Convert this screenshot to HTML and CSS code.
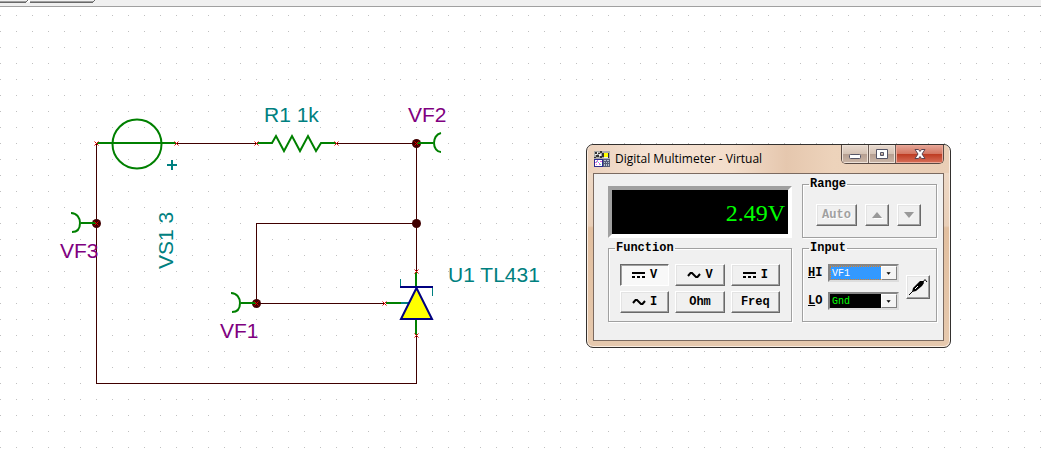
FILE: index.html
```html
<!DOCTYPE html>
<html lang="en">
<head>
<meta charset="utf-8">
<title>Digital Multimeter - Virtual</title>
<link rel="stylesheet" href="styles.css">
</head>
<body>
<header class="tabs">
  <svg width="100" height="6" viewBox="0 0 100 6" shape-rendering="crispEdges" aria-hidden="true">
    <path fill="#fff" d="M27 0h3v2h-3z"/>
    <path fill="#a0a0a0" d="M0 1h26v1H0zM30 1h63v1H30z"/>
    <path fill="#696969" d="M0 2h26v1H0zM30 2h63v1H30zM26 1h1v1h-1zM27 0h1v1h-1zM93 1h1v1h-1zM94 0h1v1h-1z"/>
  </svg>
</header>
<main class="canvas">
  <svg class="schematic" width="580" height="420" viewBox="0 7 580 420" role="img" aria-label="TL431 circuit">
    <defs>
      <g id="pin"><path d="M-2 -2L2 2M2 -2L-2 2"/></g>
    </defs>
    <g class="wire">
      <path d="M96.500 143.500V383.500H416.500V335M176 143.500H257M336 143.500H416.500V271M416 223.500H256.500V303.500H385"/>
    </g>
    <g class="node">
      <circle cx="96.500" cy="223.500" r="4.500"/>
      <circle cx="416.500" cy="143.500" r="4.500"/>
      <circle cx="416.500" cy="223.500" r="4.500"/>
      <circle cx="256.500" cy="303.500" r="4.500"/>
    </g>
    <g class="part">
      <path d="M97 143H176"/>
      <circle cx="137" cy="144" r="24.500"/>
      <path d="M257 143H272L276 136L284 151L292 136L300 151L308 136L316 151L321 143H336"/>
      <path d="M96 223H81M71 213C77 213 80 218 80 223C80 228 78 232 72 232"/>
      <path d="M417 143H433M441 133C436 134 434 139 434 143C434 148 437 152 441 152"/>
      <path d="M256 303H241M231 293C237 293 240 298 240 303C240 308 238 312 232 312"/>
      <path d="M416 272V288M416 319V335M386 303H401"/>
    </g>
    <g class="tip">
      <path d="M400.500 279V287M432.500 287V296"/>
      <path d="M401 303H410" stroke-width="2"/>
      <path d="M167 165H177M172 160V170" stroke-width="2"/>
    </g>
    <path class="diode" d="M416.500 288L401 319H432Z"/>
    <path class="bar" d="M400 287H433"/>
    <g class="pins">
      <use href="#pin" x="96.500" y="143.500"/>
      <use href="#pin" x="176.500" y="143.500"/>
      <use href="#pin" x="256.500" y="143.500"/>
      <use href="#pin" x="336.500" y="143.500"/>
      <use href="#pin" x="416.500" y="143.500"/>
      <use href="#pin" x="96.500" y="223.500"/>
      <use href="#pin" x="256.500" y="303.500"/>
      <use href="#pin" x="384.500" y="303.500"/>
      <use href="#pin" x="416.500" y="271.500"/>
      <use href="#pin" x="416.500" y="335.500"/>
    </g>
    <g class="name">
      <text x="264" y="122">R1 1k</text>
      <text x="448" y="282">U1 TL431</text>
      <text transform="translate(173 269) rotate(-90)">VS1 3</text>
    </g>
    <g class="probe">
      <text x="408" y="122">VF2</text>
      <text x="60" y="258">VF3</text>
      <text x="220" y="338">VF1</text>
    </g>
  </svg>

  <section class="window" aria-labelledby="title">
    <div class="titlebar">
      <svg class="appicon" width="16" height="16" viewBox="0 0 16 16" shape-rendering="crispEdges" aria-hidden="true">
        <path fill="#aaa" d="M0 0h16v8H0z"/>
        <path fill="#333" d="M1 1h2v2H1zM4 2h2v1H4zM2 4h3v2H2zM6 0h2v2H6zM0 6h2v1H0zM6 5h2v2H6zM8 2h2v4H8zM14 2h1v5h-1z"/>
        <path fill="#eee" d="M3 1h1v2H3zM1 3h2v1H1zM5 3h2v2H5zM10 6h4v1h-4z"/>
        <path fill="#ff0" d="M10 2h4v4h-4z"/>
        <path fill="#2b2b90" d="M0 8h9v8H0z"/>
        <path fill="#fff" d="M1 9h7v6H1z"/>
        <path fill="#e070e0" d="M1 11h2v1H1zM3 9h1v2H3zM5 12h1v2H5zM6 10h2v1H6zM2 13h1v1H2z"/>
        <path fill="#64c8d8" d="M4 11h1v1H4zM6 13h1v1H6zM2 10h1v1H2z"/>
        <path fill="#555c78" d="M9 8h7v8H9z"/>
        <path fill="#b8c0d0" d="M10 9h2v1h-2zM13 9h2v1h-2zM10 11h1v1h-1zM12 11h1v1h-1zM14 11h1v1h-1zM10 13h1v2h-1zM12 13h1v2h-1zM14 13h1v2h-1z"/>
      </svg>
      <h1 class="title" id="title">Digital Multimeter - Virtual</h1>
      <div class="controls">
        <button class="ctl" aria-label="Minimize"><svg width="14" height="12" viewBox="0 0 14 12"><rect x="1.500" y="6.500" width="11" height="4" rx="1" fill="#fff" stroke="#555566"/></svg></button>
        <button class="ctl" aria-label="Maximize"><svg width="14" height="12" viewBox="0 0 14 12"><path fill="#fff" fill-rule="evenodd" stroke="#555566" d="M1.500 1.500h11v9h-11zM5.500 4.500h3v3h-3z"/></svg></button>
        <button class="ctl close" aria-label="Close"><svg width="14" height="12" viewBox="0 0 14 12"><path fill="#fff" stroke="#5b4450" d="M2 1.500H5.500L7 3.500L8.500 1.500H12L9 6L12 10.500H8.500L7 8.500L5.500 10.500H2L5 6Z"/></svg></button>
      </div>
    </div>
    <div class="client">
      <output class="display">2.49V</output>
      <fieldset class="group">
        <legend>Range</legend>
        <div class="range">
          <button class="key auto" disabled>Auto</button>
          <button class="key step" disabled aria-label="Range up"><svg width="11" height="7" viewBox="0 0 11 7"><path fill="#fff" d="M2 6h9v1H2z"/><path fill="#999" d="M5 0L10 6H0Z"/></svg></button>
          <button class="key step" disabled aria-label="Range down"><svg width="11" height="7" viewBox="0 0 11 7"><path fill="#fff" d="M11 1L6 7V6Z"/><path fill="#999" d="M0 0H10L5 6Z"/></svg></button>
        </div>
      </fieldset>
      <fieldset class="group">
        <legend>Function</legend>
        <div class="functions">
          <button class="key on" aria-pressed="true"><svg width="14" height="8" viewBox="0 0 14 8" shape-rendering="crispEdges"><path d="M0 1h13v2H0zM0 5h3v2H0zM5 5h3v2H5zM10 5h3v2h-3z"/></svg>V</button>
          <button class="key"><svg width="14" height="8" viewBox="0 0 14 8"><path class="sine" d="M1 5L3.500 2H5L9 6H10.500L13 3"/></svg>V</button>
          <button class="key"><svg width="14" height="8" viewBox="0 0 14 8" shape-rendering="crispEdges"><path d="M0 1h13v2H0zM0 5h3v2H0zM5 5h3v2H5zM10 5h3v2h-3z"/></svg>I</button>
          <button class="key"><svg width="14" height="8" viewBox="0 0 14 8"><path class="sine" d="M1 5L3.500 2H5L9 6H10.500L13 3"/></svg>I</button>
          <button class="key">Ohm</button>
          <button class="key">Freq</button>
        </div>
      </fieldset>
      <fieldset class="group">
        <legend>Input</legend>
        <div class="inputs">
          <div class="pairs">
            <label for="hi"><u>H</u>I</label>
            <div class="combo"><select class="pick active" id="hi"><option>VF1</option></select><svg class="arrow" width="16" height="14" viewBox="0 0 16 14" aria-hidden="true"><path d="M5 6h5L7.500 9z"/></svg></div>
            <label for="lo"><u>L</u>O</label>
            <div class="combo"><select class="pick" id="lo"><option>Gnd</option></select><svg class="arrow" width="16" height="14" viewBox="0 0 16 14" aria-hidden="true"><path d="M5 6h5L7.500 9z"/></svg></div>
          </div>
          <button class="key step" aria-label="Probe"><svg class="lead" width="20" height="18" viewBox="0 0 20 18"><path d="M1 17L5 13" stroke="#000"/><path d="M4 14L5 10L12 3H15L16 5L14 8L8 13Z"/><path d="M7 11L10 8" stroke="#fff"/><path d="M15 4L17 1.500L19 4" fill="none" stroke="#000"/></svg></button>
        </div>
      </fieldset>
    </div>
  </section>
</main>
</body>
</html>
```
FILE: styles.css
```css
* { box-sizing: border-box; }
body {
  margin: 0;
  min-height: 100vh;
  display: flex;
  flex-direction: column;
  background: #fff;
  font-family: "Liberation Mono", monospace;
  font-size: 12px;
}
.tabs {
  height: 7px;
  background: #f0f0f0;
  border-bottom: 1px solid #a0a0a0;
}
.tabs svg { display: block; }
.canvas {
  flex: 1;
  position: relative;
  background-image: conic-gradient(from 90deg at 15px 15px, #c0c0c0 90deg, transparent 0);
  background-size: 16px 16px;
  background-position: 1px 9px;
}
.schematic { display: block; }
.wire { fill: none; stroke: #400000; stroke-width: 1; shape-rendering: crispEdges; }
.node { fill: #400000; }
.part { fill: none; stroke: #008000; stroke-width: 2; }
.tip { fill: none; stroke: #008080; stroke-width: 1; }
.diode { fill: #ff0; stroke: #000080; stroke-width: 2; }
.bar { stroke: #000080; stroke-width: 2; }
.pins { stroke: #e00000; stroke-width: 1; }
.schematic text { font-family: "Liberation Sans", sans-serif; font-size: 21px; }
.name { fill: #008080; }
.probe { fill: #800080; }

.window {
  position: absolute;
  left: 586px;
  top: 137px;
  width: 365px;
  padding: 0 6px 6px;
  border: 1px solid #33302e;
  border-radius: 7px;
  background: linear-gradient(#f0ddcc, #e9cfb8 40%, #e2bf9f 41%, #e6c9ae);
  box-shadow: inset 0 0 0 1px #fbeee2;
}
.titlebar {
  display: flex;
  align-items: center;
  gap: 5px;
  height: 28px;
  margin: 0 -5px;
  padding-left: 6px;
  border-radius: 6px 6px 0 0;
  background: linear-gradient(90deg, #ecd2bd, #f5e3d5 18%, #f3ddca 40%, #e5c7ae 55%, #edd3bb 68%, #e9ceb6);
}
.title {
  flex: 1;
  margin: 0;
  padding-bottom: 2px;
  font: 12px "Open Sans", "Noto Sans", sans-serif;
  color: #000;
}
.controls {
  display: flex;
  align-self: flex-start;
  margin-right: 5px;
  border: 1px solid #594a44;
  border-top: 0;
  border-radius: 0 0 5px 5px;
  overflow: hidden;
}
.ctl {
  display: flex;
  align-items: center;
  justify-content: center;
  width: 27px;
  height: 18px;
  padding: 0;
  border: 0;
  border-right: 1px solid #6b5c55;
  background: linear-gradient(#e9dbd0, #d5c3b5 48%, #b59e90 50%, #cbb6a7);
  box-shadow: inset 0 0 0 1px #eee2d8;
}
.close {
  width: 47px;
  border-right: 0;
  background: linear-gradient(#e6a799, #d47762 48%, #bd3a20 50%, #d8705a);
  box-shadow: inset 0 0 0 1px #eba898;
}
.client {
  display: grid;
  grid-template-columns: 184px 1fr;
  column-gap: 10px;
  row-gap: 4px;
  padding: 4px 6px 18px 14px;
  border: 1px solid #7b6a60;
  background: #f0f0f0;
}
.display {
  margin-top: 8px;
  height: 52px;
  padding-right: 3px;
  border: 4px solid;
  border-color: #a0a0a0 #fff #fff #a0a0a0;
  background: #000;
  color: #0f0;
  font: 24px/46px "Liberation Serif", serif;
  text-align: right;
}
.group {
  min-width: 0;
  margin: 0;
  padding: 0 11px 8px;
  border: 1px solid #a0a0a0;
  box-shadow: 1px 1px 0 #fff, inset 1px 1px 0 #fff;
}
legend {
  margin-left: -5px;
  padding: 0 1px;
  font-weight: bold;
  line-height: 12px;
}
.key {
  display: flex;
  align-items: center;
  justify-content: center;
  gap: 4px;
  height: 22px;
  padding: 0;
  border: 1px solid;
  border-color: #fff #696969 #696969 #fff;
  background: #f0f0f0;
  box-shadow: inset -1px -1px 0 #a0a0a0, inset 1px 1px 0 #e3e3e3;
  color: #000;
  font: bold 12px "Liberation Mono", monospace;
}
.key:disabled { color: #a0a0a0; text-shadow: 1px 1px 0 #fff; }
.on {
  border-color: #696969 #fff #fff #696969;
  background: #f8f8f8;
  box-shadow: inset 1px 1px 0 #a0a0a0;
}
.sine { fill: none; stroke: #000; stroke-width: 2; }
.step { width: 24px; }
.range { display: flex; gap: 8px; padding: 14px 0 3px 2px; }
.auto { width: 41px; }
.functions {
  display: grid;
  grid-template-columns: repeat(3, 1fr);
  column-gap: 6px;
  row-gap: 5px;
  padding-top: 10px;
}
.inputs {
  display: flex;
  align-items: center;
  gap: 7px;
  margin: 0 -6px;
  padding-top: 10px;
}
.pairs {
  flex: 1;
  display: grid;
  grid-template-columns: 20px 1fr;
  row-gap: 10px;
  align-items: center;
  font-weight: bold;
}
.inputs .step { height: 24px; margin-right: 1px; }
.lead { flex: none; }
.combo { position: relative; height: 18px; }
.pick {
  display: block;
  width: 100%;
  height: 18px;
  padding: 0 0 0 2px;
  appearance: none;
  border: 2px solid;
  border-color: #858585 #ddd #ddd #858585;
  border-radius: 0;
  background: #000;
  color: #0f0;
  font: 10px "Liberation Mono", monospace;
}
.active { background: #39f; color: #fff; outline: 1px dotted #e08020; outline-offset: -3px; }
.arrow {
  position: absolute;
  right: 2px;
  top: 2px;
  border: 1px solid;
  border-color: #fff #808080 #808080 #fff;
  background: #f4f4f4;
  pointer-events: none;
}
```
